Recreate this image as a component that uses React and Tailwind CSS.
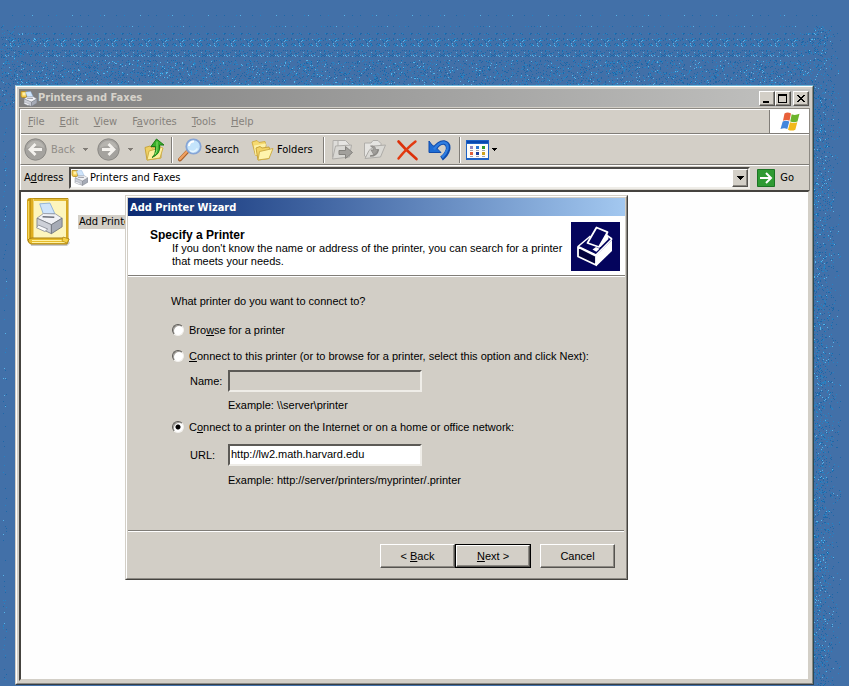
import { useState } from "react";
import clsx from "clsx";

// scattered one-pixel dots of the wallpaper, the same on every load
function hash(x, y) {
  let n = Math.imul(x + 11, 374761393) + Math.imul(y + 7, 668265263);
  n = Math.imul(n ^ (n >>> 13), 1274126177);
  return ((n ^ (n >>> 16)) >>> 0) / 4294967296;
}

function density(x, y) {
  if (y < 88 && x > 5 && x < 826) {
    if (y === 15) return x % 4 === 0 ? 0.5 : 0;
    if (y === 26) return x % 3 === 0 ? 0.8 : 0;
    if (y === 33 || y === 34) return 0.3;
    if (y >= 38 && y < 47) return 0.25;
    if (y >= 50 && y < 57) return 0.25;
    if (y >= 60) return 0.18;
  }
  if (x < 15) {
    if (y > 24 && y < 110) return 0.12;
    return y > 110 && x > 2 && x < 7 ? 0.05 : 0;
  }
  if (x > 813 && y > 25) {
    if (x < 826) return 0.2;
    if (x < 834) return 0.1;
    return x < 841 ? 0.03 : 0;
  }
  return 0;
}

function buildDots() {
  const paths = ["", "", ""];
  for (let y = 0; y < 686; y++) {
    for (let x = 0; x < 849; x++) {
      const d = density(x, y);
      if (!d) continue;
      const hx = y < 58 && x > 40 && x < 800 ? x % 17 : x;
      if (hash(hx, y) < d) {
        const tone = hash(hx + 900, y + 900);
        const i = tone < 0.12 ? 2 : tone < 0.5 ? 1 : 0;
        paths[i] += `M${x} ${y}h1v1h-1z`;
      }
    }
  }
  return paths;
}

const dots = buildDots();

function Wallpaper() {
  return (
    <svg className="absolute left-0 top-0 pointer-events-none" width="849" height="686" shapeRendering="crispEdges" aria-hidden="true">
      <path d={dots[0]} fill="#1c67a8" />
      <path d={dots[1]} fill="#2384c6" />
      <path d={dots[2]} fill="#55b4ea" />
    </svg>
  );
}

/* ---------- icons ---------- */

function PrinterArt() {
  return (
    <>
      <path d="M6.5 6.8 4.200 1 10.600.6l3 5.800z" fill="#cfe4fb" stroke="#86abd6" strokeWidth=".5" />
      <path d="m2.500 9 4-2.600 7.500.2 4.200 2.400-6.700 3.600z" fill="#f0f1f5" stroke="#9296a0" strokeWidth=".5" />
      <path d="m2.500 9 9 3.600v5L2.500 13.800z" fill="#cdd0d8" stroke="#7c8089" strokeWidth=".5" />
      <path d="m11.500 12.600 6.700-3.600v4.800l-6.700 3.800z" fill="#a6abb6" stroke="#6e727b" strokeWidth=".5" />
      <path d="m3.400 12.800 5.800 2.200-1.800 1.400-5.200-2.100z" fill="#f8f9fb" stroke="#8a8e98" strokeWidth=".5" />
      <path d="m6 8.200 7.300.3" stroke="#6c707a" strokeWidth=".8" />
    </>
  );
}

function PrintersIcon() {
  return (
    <svg width="17" height="17" viewBox="0 0 17 17" className="shrink-0" aria-hidden="true">
      <path d="M1 1.500h5.500v6H2.300L1 6.500z" fill="#f2ca4b" stroke="#b58a1c" strokeWidth=".8" />
      <path d="M2.500 2.500h3v3h-3z" fill="#fff0ac" />
      <g transform="translate(2 1) scale(.82 .88)">
        <PrinterArt />
      </g>
    </svg>
  );
}

function AddPrinterIcon() {
  return (
    <svg width="46" height="50" viewBox="0 0 46 50" className="shrink-0" aria-hidden="true">
      <path d="M4 43h38l2 3-3 3H5z" fill="#000" opacity=".2" />
      <path d="M1 4q0-3 3-3h2v41q-4 0-4 3l-1-3z" fill="#c9980d" />
      <path d="M2.500 4v38" stroke="#f5d558" strokeWidth="1.500" />
      <path d="M5 1.500h37V42H5z" fill="#fdf5bd" stroke="#b78e16" />
      <path d="M5 1.500h2.500V42H5z" fill="#dfae20" />
      <path d="M8 3H41" stroke="#e5bd36" strokeWidth="2" />
      <path d="M41 3v38" stroke="#d6a922" strokeWidth="2" />
      <path d="M2 43q1-2 4-2h33l4 1-2 5H5q-3-1-3-4z" fill="#e8bd2c" stroke="#a87f10" />
      <path d="M6 43.500h33M6 45.500h33" stroke="#fff2a3" />
      <path d="M37 40l6 2-2 4-5-2z" fill="#f5d147" stroke="#b18a18" strokeWidth=".7" />
      <g transform="translate(7 5) scale(1.600 1.800)">
        <PrinterArt />
      </g>
    </svg>
  );
}

function RoundArrow({ back }) {
  return (
    <svg width="23" height="23" viewBox="0 0 23 23" aria-hidden="true">
      <circle cx="11.500" cy="11.500" r="10.700" fill="#a4a29e" stroke="#8b8985" />
      <path d="M2.500 10a9.200 9.200 0 0 1 18 0q-9-4-18 0z" fill="#b6b4af" />
      <path
        d={back ? "M18 11.500H6.500M11.500 6l-5.500 5.500 5.500 5.500" : "M5 11.500h11.500M11.500 6l5.500 5.500-5.500 5.500"}
        fill="none" stroke="#f4f2ee" strokeWidth="2.800"
      />
    </svg>
  );
}

function UpFolderIcon() {
  return (
    <svg width="21" height="23" viewBox="0 0 21 23" aria-hidden="true">
      <path d="M1 9.500 6 8l2 2 8-2 1 4v8L3 22z" fill="#efd064" stroke="#c7a53c" />
      <path d="m5 13 12.500-3.500 1.500.5-3 10L3 22z" fill="#fdf0a0" stroke="#cfae48" />
      <path d="M8 19.500q4-2.500 3.500-11H7l5.500-7.500L20 7h-4.500Q17 16 8 19.500z" fill="#38b02b" stroke="#1b7a14" />
      <path d="M13 3.500v5q.5 5-2 8" fill="none" stroke="#8fe070" />
    </svg>
  );
}

function SearchIcon() {
  return (
    <svg width="24" height="24" viewBox="0 0 24 24" aria-hidden="true">
      <path d="m2 21.500 7-7.500" stroke="#a65f28" strokeWidth="4" strokeLinecap="round" />
      <path d="m2 21 7-7.500" stroke="#f0a060" strokeWidth="2.400" strokeLinecap="round" />
      <circle cx="15.500" cy="8.500" r="7.200" fill="#c4e4fb" stroke="#86a5d6" strokeWidth="1.800" />
      <path d="M11 8a4.500 4.500 0 0 1 5-4.500" fill="none" stroke="#fff" strokeWidth="2" />
      <path d="M12 12.500q4 3 7.500-2" fill="none" stroke="#e7f6ff" strokeWidth="1.500" />
    </svg>
  );
}

function FoldersIcon() {
  return (
    <svg width="23" height="22" viewBox="0 0 23 22" aria-hidden="true">
      <path d="m1 3 5-1.500L8 3.500l6-1 1 4-2 9-8.500 1z" fill="#f6da70" stroke="#d0ae48" />
      <path d="m3 6.500 12-2-2 9-8.500 3z" fill="#fdf1a6" />
      <path d="m5 9 4-1.500 2 1.500 7-1 1 3.500-1 8-11 1.500z" fill="#f3d464" stroke="#c9a43c" />
      <path d="m8.500 12.500 13.500-3-4 10L7 21z" fill="#fff4ac" stroke="#cfae48" />
    </svg>
  );
}

function MoveToIcon() {
  return (
    <svg width="23" height="22" viewBox="0 0 23 22" aria-hidden="true">
      <path d="M2 4V1.500h6L10 4h2v14H1.500z" fill="#deddda" stroke="#b0aeaa" />
      <path d="M7 1.500h7.500l4 4V11H7z" fill="#e6e5e2" stroke="#b0aeaa" />
      <path d="m1.500 20 3-13 16-1-2 12z" fill="#d9d8d4" stroke="#aeaca8" />
      <path d="M8 11.500h6.500V7.500l7 6-7 6v-4H8z" fill="#a2a09c" stroke="#85837f" />
    </svg>
  );
}

function CopyToIcon() {
  return (
    <svg width="24" height="22" viewBox="0 0 24 22" aria-hidden="true">
      <path d="M1.500 4H8l2-2.500h5l3 3v6L5 18.500 1.500 17z" fill="#e5e4e1" stroke="#b0aeaa" />
      <path d="m2 19.500 4-8 5-4.500 11.500-1-5 12z" fill="#dad9d5" stroke="#aeaca8" />
      <path d="M7.500 7q5-1 5 3.500h3l-4.500 5.500-3-5h2.500q0-3-3-4z" fill="#a19f9b" stroke="#85837f" strokeWidth=".7" />
      <path d="M7 17q7 0 8.500-6.500" fill="none" stroke="#8a8884" strokeWidth="1.500" />
    </svg>
  );
}

function DeleteIcon() {
  return (
    <svg width="23" height="22" viewBox="0 0 23 22" aria-hidden="true">
      <path d="m2.500 2.500 6.500 7L20.500 20" fill="none" stroke="#dc3009" strokeWidth="2.600" strokeLinecap="round" />
      <path d="M19.500 2.500Q11 9 2.500 19.500" fill="none" stroke="#e23a10" strokeWidth="2.400" strokeLinecap="round" />
    </svg>
  );
}

function UndoIcon() {
  return (
    <svg width="23" height="22" viewBox="0 0 23 22" aria-hidden="true">
      <path d="M6.500 10Q11 3 16 3.500q5 1 4 7-1.500 5.500-6.500 9" fill="none" stroke="#0f4bab" strokeWidth="4.600" />
      <path d="M1 2v11.500h12L9.500 10 8 8.500 4 6z" fill="#1d6cd4" stroke="#0f4bab" />
      <path d="M6 10.500Q11 3 16 3.500q4.500 1 3.500 6.500-1.500 5-5.500 8.500" fill="none" stroke="#2f7de0" strokeWidth="2.400" />
    </svg>
  );
}

function ViewsIcon() {
  return (
    <svg width="23" height="20" viewBox="0 0 23 20" shapeRendering="crispEdges" aria-hidden="true">
      <path d="M0 0h23v20H0z" fill="#1c62c6" />
      <path d="M1 1h21v2H1z" fill="#0a48ae" />
      <path d="M1 4h21v14H1z" fill="#fdfdfa" />
      <path d="M4 6h3v3H4z" fill="#8f86c4" />
      <path d="M10 6h3v3h-3z" fill="#2a76d4" />
      <path d="M16 6h3v3h-3z" fill="#2c9a2c" />
      <path d="M4 12h3v3H4z" fill="#e2603a" />
      <path d="M10 12h3v3h-3z" fill="#1a3f9c" />
      <path d="M16 12h3v3h-3z" fill="#cda31c" />
      <path d="M4 10h3v1H4zM10 10h3v1h-3zM16 10h3v1h-3zM4 16h3v1H4zM10 16h3v1h-3zM16 16h3v1h-3z" fill="#a2a6ae" />
    </svg>
  );
}

function FlagIcon() {
  return (
    <svg width="20" height="19" viewBox="0 0 20 19" aria-hidden="true">
      <path d="M4.500 1.500q3-1.800 6.500 0L9.500 8.800q-3-1.500-6.500 0z" fill="#e8603a" />
      <path d="M11.700 2.300q3.500 1.500 7.800-.5l-2 7.700q-3.700 1.500-7.300 0z" fill="#6cb42c" />
      <path d="M2.700 9.500q3-1.500 6.600 0l-2 7.500q-3-1.500-6.800 0z" fill="#4286dc" />
      <path d="M10 10.200q3.500 1.500 7.300 0l-2 7.500q-3.500 1.700-7.300 0z" fill="#f2b91c" />
    </svg>
  );
}

function WizardIcon() {
  return (
    <svg width="49" height="49" viewBox="0 0 49 49" className="shrink-0" aria-hidden="true">
      <path d="M0 0h49v49H0z" fill="#04045c" />
      <path d="m7 24.500 12.500-10.500M36 13.500l5 3.500M7 24.500l18 8.500 16-16" fill="none" stroke="#fff" strokeWidth="1.600" strokeLinejoin="round" />
      <path d="M7 25v9.500L25 43V34z" fill="#02023c" stroke="#fff" strokeWidth="1.800" strokeLinejoin="round" />
      <path d="m25 33.500 16-15.500v11L25 44.500z" fill="#fff" />
      <path d="m16.500 21 9-15.500 11 4.700L28 25z" fill="#04045c" stroke="#fff" strokeWidth="1.800" strokeLinejoin="round" />
      <path d="m36 10.500 1.500 6.500-8 8-1.500 0z" fill="#fff" />
      <path d="m21.500 27.500 3.500-2.500 3.500 1.800-3.200 3z" fill="#fff" />
    </svg>
  );
}

function Caret({ className }) {
  return (
    <svg width="7" height="4" viewBox="0 0 7 4" shapeRendering="crispEdges" className={className} aria-hidden="true">
      <path d="M0 0h7v1H0zM1 1h5v1H1zM2 2h3v1H2zM3 3h1v1H3z" fill="currentColor" />
    </svg>
  );
}

function SmallCaret({ className }) {
  return (
    <svg width="5" height="3" viewBox="0 0 5 3" shapeRendering="crispEdges" className={className} aria-hidden="true">
      <path d="M0 0h5v1H0zM1 1h3v1H1zM2 2h1v1H2z" fill="currentColor" />
    </svg>
  );
}

/* ---------- shared pieces ---------- */

const raised = "border border-t-white border-l-white border-r-[#55534f] border-b-[#55534f] bg-[#d3cfc7] shadow-[inset_-1px_-1px_0_#8c8983]";

// "&" goes before the access key
function Label({ text }) {
  const i = text.indexOf("&");
  if (i < 0) return text;
  return (
    <>
      {text.slice(0, i)}
      <u className="underline-offset-1">{text[i + 1]}</u>
      {text.slice(i + 2)}
    </>
  );
}

function CaptionButton({ label, children }) {
  return (
    <button type="button" aria-label={label} className={clsx(raised, "w-4 h-[15px] flex items-center justify-center text-black")}>
      <svg width="12" height="11" viewBox="0 0 12 11" shapeRendering="crispEdges" aria-hidden="true">{children}</svg>
    </button>
  );
}

function Separator() {
  return <div className="w-[2px] h-[26px] bg-[#807d78] border-r border-white shrink-0" />;
}

function Radio({ id, checked, onChange, children }) {
  return (
    <div className="flex items-center gap-[5px] h-4 pl-[44px]">
      <input
        id={id} type="radio" name="target" checked={checked} onChange={onChange}
        className="appearance-none w-3 h-3 shrink-0 rounded-full bg-white border border-t-[#5c5a56] border-l-[#5c5a56] border-r-[#f2f0ec] border-b-[#f2f0ec] shadow-[inset_1px_1px_0_#a09d97] checked:bg-[radial-gradient(circle,#000_0_2px,#fff_3px)]"
      />
      <label htmlFor={id} className="whitespace-nowrap"><Label text={children} /></label>
    </div>
  );
}

const field = "w-[194px] h-[22px] px-px pb-[2px] outline-none border-2 border-t-[#5c5a56] border-l-[#5c5a56] border-r-[#efede8] border-b-[#efede8]";

function Wizard() {
  const [target, setTarget] = useState("url");
  const [name, setName] = useState("");
  const [url, setUrl] = useState("http://lw2.math.harvard.edu");

  return (
    <section className="absolute left-[104px] top-[3px] w-[503px] border border-t-[#d3cfc7] border-l-[#d3cfc7] border-r-[#45433f] border-b-[#45433f] bg-[#d2cec6] font-['Liberation_Sans',Arial,sans-serif] text-[11px] leading-[13px] text-black">
      <div className="border border-t-white border-l-white border-r-[#8c8983] border-b-[#8c8983] p-px">
        <h2 className="h-[18px] flex items-center pl-[2px] bg-linear-to-r from-[#0c2a72] to-[#a3c8f0] font-['DejaVu_Sans_Condensed',Tahoma,sans-serif] font-bold text-white">
          Add Printer Wizard
        </h2>

        <div className="flex justify-between items-start bg-white h-[60px] pt-[6px] pl-[22px] pr-[5px] border-b border-[#807d78]">
          <div className="pt-[6px]">
            <h3 className="text-xs font-bold leading-[14px]">Specify a Printer</h3>
            <p className="pl-[22px] w-[415px]">
              If you don't know the name or address of the printer, you can search for a printer that meets your needs.
            </p>
          </div>
          <WizardIcon />
        </div>

        <form id="wizard" onSubmit={(e) => e.preventDefault()} className="border-t border-white pt-[18px]">
          <p className="pl-[43px] mb-[14px]">What printer do you want to connect to?</p>

          <Radio id="browse" checked={target === "browse"} onChange={() => setTarget("browse")}>Bro&wse for a printer</Radio>

          <div className="mt-[10px]">
            <Radio id="shared" checked={target === "shared"} onChange={() => setTarget("shared")}>
              &Connect to this printer (or to browse for a printer, select this option and click Next):
            </Radio>
            <div className="mt-[6px] pl-[62px] flex items-center">
              <label htmlFor="name" className="w-[38px]">Name:</label>
              <input
                id="name" type="text" value={name} disabled={target !== "shared"}
                onChange={(e) => setName(e.target.value)}
                className={clsx(field, "bg-white disabled:bg-[#d2cec6]")}
              />
            </div>
            <p className="mt-[7px] pl-[100px]">Example: \\server\printer</p>
          </div>

          <div className="mt-[7px]">
            <Radio id="internet" checked={target === "url"} onChange={() => setTarget("url")}>
              C&onnect to a printer on the Internet or on a home or office network:
            </Radio>
            <div className="mt-[9px] pl-[62px] flex items-center">
              <label htmlFor="url" className="w-[38px]">URL:</label>
              <input
                id="url" type="text" value={url} disabled={target !== "url"}
                onChange={(e) => setUrl(e.target.value)}
                className={clsx(field, "bg-white disabled:bg-[#d2cec6]")}
              />
            </div>
            <p className="mt-[8px] pl-[100px]">Example: http://server/printers/myprinter/.printer</p>
          </div>
        </form>

        <div className="mt-[43px] mr-px border-t border-[#807d78]">
          <div className="border-t border-white pt-3 pb-[9px] pr-[9px] flex justify-end">
            <button type="button" className={clsx(raised, "w-[75px] h-[24px]")}>&lt; <Label text="&Back" /></button>
            <div className="border border-black h-6 mr-[9px] flex">
              <button type="submit" form="wizard" className={clsx(raised, "w-[74px] h-[22px]")}><Label text="&Next" /> &gt;</button>
            </div>
            <button type="button" className={clsx(raised, "w-[75px] h-[24px]")}>Cancel</button>
          </div>
        </div>
      </div>
    </section>
  );
}

const menus = ["&File", "&Edit", "&View", "F&avorites", "&Tools", "&Help"];

export default function App() {
  const [address, setAddress] = useState("Printers and Faxes");

  return (
    <main className="relative min-h-screen flex flex-col bg-[#4270a8] pt-[85px] pl-[15px] pr-[35px] pb-px font-['DejaVu_Sans_Condensed',Tahoma,sans-serif] text-[11px] leading-[14px] text-black">
      <Wallpaper />

      <div className="relative grow flex flex-col border border-t-[#6fb9dc] border-l-[#d3cfc7] border-r-[#2c4a52] border-b-[#333e48] bg-[#d3cfc7]">
        <div className="grow flex flex-col border border-t-white border-l-white border-r-[#8c8983] border-b-[#8c8983] p-[2px]">

          {/* Title bar */}
          <header className="h-[18px] flex items-center justify-between bg-linear-to-r from-[#7f7f7f] to-[#c2c2c0] pl-px pr-px">
            <div className="flex items-center gap-px">
              <PrintersIcon />
              <h1 className="font-bold text-[#d6d2ca]">Printers and Faxes</h1>
            </div>
            <div className="flex">
              <CaptionButton label="Minimize"><path d="M2 8h6v2H2z" /></CaptionButton>
              <CaptionButton label="Maximize"><path d="M1 1h9v9H1zM2 3v6h7V3z" fillRule="evenodd" /></CaptionButton>
              <div className="w-[2px]" />
              <CaptionButton label="Close"><path d="M2 2h2v1h1v1h2V3h1V2h2v1H9v1H8v1H7v1h1v1h1v1h1v1H8V8H7V7H5v1H4v1H2V8h1V7h1V6h1V5H4V4H3V3H2z" /></CaptionButton>
            </div>
          </header>

          <div className="mt-px border border-[#8c8983] border-b-0">
            {/* Menu bar */}
            <nav className="flex h-[25px] border-t border-l border-white">
              <div className="grow flex items-center gap-[15px] pl-[7px] text-[#85817b] border-b border-r border-[#807d78]">
                {menus.map((m) => (
                  <button key={m} type="button"><Label text={m} /></button>
                ))}
              </div>
              <div className="w-[39px] flex items-center justify-center bg-white border-b border-[#807d78]"><FlagIcon /></div>
            </nav>

            {/* Toolbar */}
            <div className="h-[31px] flex items-center border-t border-l border-white border-b border-b-[#807d78] pl-[3px]">
              <button type="button" className="flex items-center gap-1 text-[#918d87]"><RoundArrow back /> Back</button>
              <SmallCaret className="ml-2 text-[#807c76]" />
              <button type="button" aria-label="Forward" className="ml-[9px]"><RoundArrow /></button>
              <SmallCaret className="ml-2 text-[#807c76]" />
              <button type="button" aria-label="Up" className="ml-[11px] mr-[6px]"><UpFolderIcon /></button>
              <Separator />
              <button type="button" className="ml-[5px] flex items-center gap-[3px]"><SearchIcon /> Search</button>
              <button type="button" className="ml-[12px] mr-[10px] flex items-center gap-[3px]"><FoldersIcon /> Folders</button>
              <Separator />
              <button type="button" aria-label="Move to" className="ml-[6px]"><MoveToIcon /></button>
              <button type="button" aria-label="Copy to" className="ml-[9px]"><CopyToIcon /></button>
              <button type="button" aria-label="Delete" className="ml-[9px]"><DeleteIcon /></button>
              <button type="button" aria-label="Undo" className="ml-[9px] mr-[8px]"><UndoIcon /></button>
              <Separator />
              <button type="button" aria-label="Views" className="ml-[5px] flex items-center gap-[3px]">
                <ViewsIcon />
                <SmallCaret />
              </button>
            </div>

            {/* Address bar */}
            <div className="h-[25px] pb-px flex items-center border-t border-l border-white pl-[3px] pr-[15px]">
              <label htmlFor="address" className="w-[45px]"><Label text="A&ddress" /></label>
              <div className="grow flex items-center h-[22px] bg-white border-2 border-t-[#4c4a47] border-l-[#4c4a47] border-r-[#efede8] border-b-[#efede8]">
                <PrintersIcon />
                <input
                  id="address" type="text" value={address} onChange={(e) => setAddress(e.target.value)}
                  className="grow min-w-0 pl-[2px] outline-none"
                />
                <button type="button" aria-label="Show addresses" className={clsx(raised, "w-4 h-[18px] flex items-center justify-center")}>
                  <Caret />
                </button>
              </div>
              <button type="button" className="ml-[7px] flex items-center gap-[5px]">
                <svg width="18" height="18" viewBox="0 0 18 18" aria-hidden="true">
                  <path d="M.5.5h17v17H.5z" fill="#2f9a33" stroke="#1c7424" />
                  <path d="M3 9h11M9 4l5 5-5 5" fill="none" stroke="#fff" strokeWidth="2" />
                </svg>
                Go
              </button>
            </div>
          </div>

          {/* Folder contents */}
          <div className="relative grow min-h-[400px] bg-[#fefefe] border-2 border-t-[#45433f] border-l-[#45433f] border-r-[#d3cfc7] border-b-[#d3cfc7]">
            <button type="button" className="flex items-center gap-[6px] pt-[5px] pl-[5px]">
              <AddPrinterIcon />
              <span className="bg-[#d3cfc7] px-px">Add Printer</span>
            </button>
            <Wizard />
          </div>
        </div>
      </div>
    </main>
  );
}
